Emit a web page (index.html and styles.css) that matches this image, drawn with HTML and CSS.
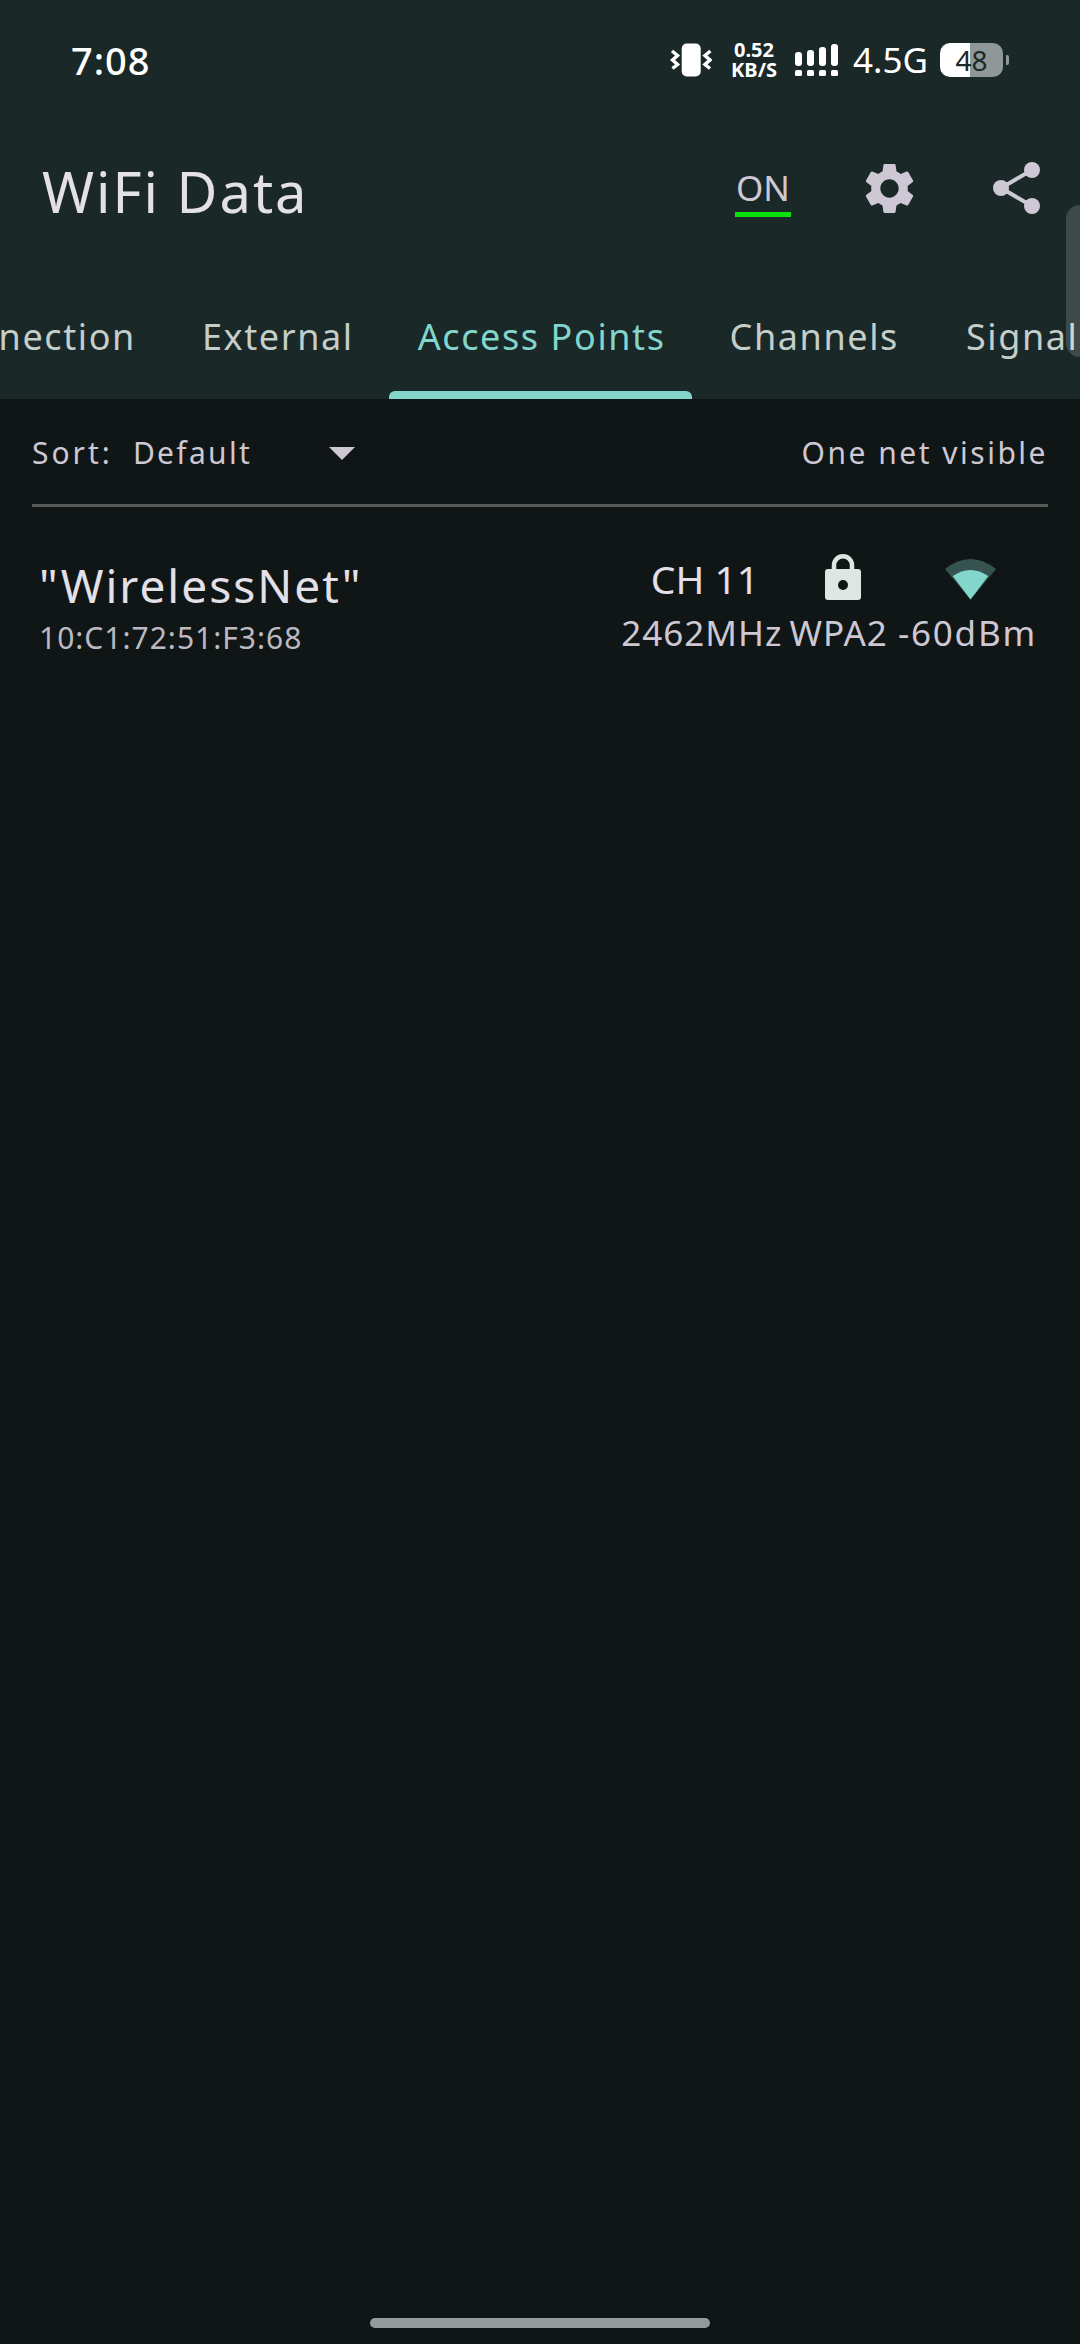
FILE: index.html
```html
<!DOCTYPE html>
<html lang="en">
<head>
<meta charset="utf-8">
<title>WiFi Data</title>
<link rel="stylesheet" href="styles.css">
</head>
<body>
<div class="screen">
  <header class="header">
    <div class="status">
      <span class="clock">7:08</span>
      <div class="status-icons">
        <svg class="ic-vib" viewBox="0 0 42 34"><rect x="11.700" y="0.500" width="19" height="33" rx="5" fill="#fff"/><path d="M2 8 L7.500 12.500 L2.500 17 L7.500 21.500 L2.500 25.500 M40.400 8 L35 12.500 L40 17 L35 21.500 L40 25.500" fill="none" stroke="#fff" stroke-width="3.500"/></svg>
        <div class="speed">0.52<br>KB/S</div>
        <svg class="ic-sig" viewBox="0 0 43 32"><g fill="#fff"><rect x="0" y="8" width="7" height="14" rx="3"/><rect x="12" y="6" width="7" height="16" rx="3"/><rect x="24" y="3" width="7" height="19" rx="3"/><rect x="36" y="0" width="7" height="22" rx="3"/><rect x="0" y="26" width="7" height="6" rx="1.500"/><rect x="12" y="26" width="7" height="6" rx="1.500"/><rect x="24" y="26" width="7" height="6" rx="1.500"/><rect x="36" y="26" width="7" height="6" rx="1.500"/></g></svg>
        <span class="net">4.5G</span>
        <div class="battery">
          <div class="batt-body"><span class="batt-num">48</span></div>
          <div class="batt-cap"></div>
        </div>
      </div>
    </div>
    <div class="appbar">
      <h1 class="title">WiFi Data</h1>
      <div class="actions">
        <div class="toggle">ON</div>
        <svg class="ic-gear" viewBox="0 0 24 24"><path fill="#cdc8d3" d="M19.140 12.940c.040-.300.060-.610.060-.940 0-.320-.020-.640-.070-.940l2.030-1.580a.49.49 0 0 0 .120-.610l-1.920-3.320a.488.488 0 0 0-.590-.220l-2.390.960c-.500-.380-1.030-.700-1.620-.940l-.360-2.540a.484.484 0 0 0-.480-.410h-3.840c-.240 0-.430.170-.470.410l-.360 2.540c-.590.240-1.130.570-1.620.940l-2.390-.960c-.220-.080-.470 0-.590.220L2.740 8.870c-.120.210-.080.470.120.610l2.030 1.580c-.050.300-.090.630-.090.940s.020.640.070.940l-2.030 1.580a.49.49 0 0 0-.120.610l1.920 3.320c.120.220.370.290.590.220l2.390-.960c.500.380 1.030.700 1.620.940l.360 2.540c.050.240.240.410.480.410h3.840c.240 0 .440-.170.470-.410l.360-2.540c.590-.240 1.130-.560 1.620-.940l2.390.960c.220.080.470 0 .590-.220l1.920-3.320c.120-.220.070-.470-.120-.610l-2.010-1.580zM12 15.600c-1.980 0-3.600-1.620-3.600-3.600s1.620-3.600 3.600-3.600 3.600 1.620 3.600 3.600-1.620 3.600-3.600 3.600z"/></svg>
        <svg class="ic-share" viewBox="0 0 47 52"><g fill="#cdc8d3"><circle cx="39" cy="8" r="8"/><circle cx="8" cy="26" r="8"/><circle cx="39" cy="44" r="8"/></g><path d="M39 8 L8 26 L39 44" fill="none" stroke="#cdc8d3" stroke-width="4"/></svg>
      </div>
    </div>
    <nav class="tabs">
      <span class="tab tab-first">Connection</span>
      <span class="tab">External</span>
      <span class="tab tab-active">Access Points</span>
      <span class="tab">Channels</span>
      <span class="tab tab-last">Signal</span>
    </nav>
    <div class="edge-handle"></div>
  </header>
  <main class="content">
    <div class="sortbar">
      <div class="sort">
        <span class="sort-label">Sort:</span>
        <span class="sort-value">Default</span>
        <span class="caret"></span>
      </div>
      <span class="visible">One net visible</span>
    </div>
    <div class="net-row">
      <div class="net-name">
        <div class="ssid">"WirelessNet"</div>
        <div class="bssid">10:C1:72:51:F3:68</div>
      </div>
      <div class="net-info">
        <div class="cell cell-ch">
          <div class="cell-top ch">CH 11</div>
          <div class="cell-sub">2462MHz</div>
        </div>
        <div class="cell cell-sec">
          <svg class="ic-lock" viewBox="0 0 36 46"><path d="M9 20 V11.250 a9 9 0 0 1 18 0 V20" fill="none" stroke="#dfe5e3" stroke-width="4.500"/><rect y="15" width="36" height="31" rx="3" fill="#dfe5e3"/><circle cx="18" cy="31" r="5" fill="#101616"/></svg>
          <div class="cell-sub">WPA2</div>
        </div>
        <div class="cell cell-sig">
          <svg class="ic-wifi" viewBox="0 0 51 41"><path d="M0 10 Q25.500 -10 51 10 L25.500 40.500 Z" fill="#36544f"/><path d="M7.700 17 Q25.500 5 43.300 17 L25.500 40.500 Z" fill="#82d6cc"/></svg>
          <div class="cell-sub cell-sub-wide">-60dBm</div>
        </div>
      </div>
    </div>
  </main>
  <div class="home-bar"></div>
</div>
</body>
</html>
```
FILE: styles.css
```css
* { box-sizing: border-box; }
html, body { margin: 0; padding: 0; }
body { background: #101616; font-family: "Noto Sans", sans-serif; }
.screen { position: relative; width: 1080px; height: 2344px; overflow: hidden; background: #101616; display: flex; flex-direction: column; }
.header { position: relative; height: 399px; background: #1a2828; display: flex; flex-direction: column; flex: none; overflow: hidden; }
.status { height: 122px; flex: none; padding: 38px 71px 0 71px; display: flex; justify-content: space-between; align-items: flex-start; color: #fff; }
.clock { font-size: 38px; line-height: 44px; font-weight: 500; letter-spacing: 1px; }
.status-icons { display: flex; align-items: center; height: 44px; }
.ic-vib { width: 42px; height: 34px; margin-right: 18px; }
.speed { width: 48px; font-size: 20px; line-height: 20px; font-weight: 700; text-align: center; margin-right: 17px; }
.ic-sig { width: 43px; height: 32px; margin-right: 15px; }
.net { font-size: 35px; line-height: 44px; margin-right: 15px; width: 72px; }
.battery { display: flex; align-items: center; gap: 3px; }
.batt-body { width: 63px; height: 34px; border-radius: 10px; background: linear-gradient(90deg, #fff 30px, #8f9897 30px); display: flex; align-items: center; justify-content: center; }
.batt-num { font-size: 28px; line-height: 34px; color: #1a2828; }
.batt-cap { width: 3px; height: 10px; border-radius: 0 2px 2px 0; background: #8f9897; }
.appbar { height: 132px; flex: none; padding: 0 40px 0 42px; display: flex; justify-content: space-between; align-items: center; }
.title { margin: 6px 0 0; font-size: 56px; line-height: 76px; font-weight: 400; letter-spacing: 2px; color: #e4e0e8; }
.actions { display: flex; align-items: center; }
.toggle { width: 56px; margin-top: 7px; padding-bottom: 2px; border-bottom: 5px solid #0be20b; font-size: 35px; line-height: 44px; color: #cdc8d3; text-align: center; margin-right: 68px; }
.ic-gear { width: 61px; height: 61px; margin-right: 73px; }
.ic-share { width: 47px; height: 52px; }
.tabs { flex: 1; display: flex; align-items: flex-end; margin-left: -105px; white-space: nowrap; }
.tab { position: relative; height: 85px; padding: 0 32px; font-size: 36px; line-height: 46px; letter-spacing: 1.600px; color: #c4cecb; }
.tab-first { padding-right: 34px; }
.tab-last { margin-left: 3px; }
.tab-active { color: #82d6cc; }
.tab-active::after { content: ""; position: absolute; left: 3px; right: 6px; bottom: 0; height: 8px; border-radius: 6px 6px 0 0; background: #82d6cc; }
.edge-handle { position: absolute; right: 0; top: 205px; width: 14px; height: 152px; border-radius: 14px 0 0 14px; background: rgba(255, 255, 255, 0.16); }
.content { flex: 1; padding: 0 32px; }
.sortbar { height: 108px; padding-top: 34px; display: flex; justify-content: space-between; align-items: flex-start; border-bottom: 3px solid #565b59; font-size: 30px; line-height: 40px; letter-spacing: 2.500px; color: #cdc8d3; }
.sort { display: flex; align-items: center; }
.sort-label { letter-spacing: 3px; }
.sort-value { margin-left: 20px; width: 196px; letter-spacing: 2.300px; }
.caret { width: 0; height: 0; border-left: 13px solid transparent; border-right: 13px solid transparent; border-top: 13px solid #cdc8d3; }
.net-row { display: flex; justify-content: space-between; padding: 49px 11px 0 7px; }
.ssid { font-size: 46px; line-height: 58px; letter-spacing: 2px; color: #e4e0e8; }
.bssid { font-size: 30px; line-height: 48px; letter-spacing: 1px; color: #bcb9c2; }
.net-info { display: flex; gap: 7px; margin-top: -2px; }
.cell { display: flex; flex-direction: column; align-items: center; }
.cell-top { height: 50px; }
.ch { font-size: 39px; line-height: 50px; color: #e4e0e8; margin-left: 6px; }
.cell-sub { font-size: 35px; line-height: 46px; letter-spacing: 1px; color: #cdc8d3; margin-top: 6px; }
.cell-sub-wide { letter-spacing: 1.800px; margin-left: 3px; }
.ic-lock { width: 36px; height: 46px; margin: 0 0 4px 9px; }
.ic-wifi { width: 51px; height: 41px; margin: 5px 0 4px 10px; }
.home-bar { position: absolute; left: 370px; top: 2318px; width: 340px; height: 10px; border-radius: 5px; background: #949a9a; }
```
